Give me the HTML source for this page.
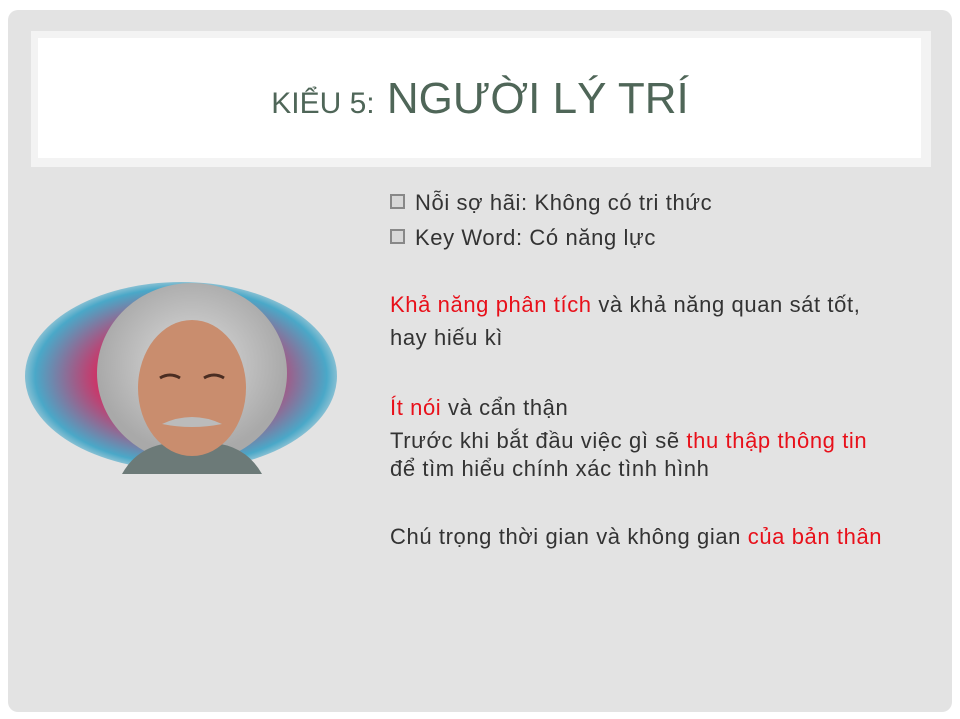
<!DOCTYPE html>
<html><head><meta charset="utf-8"><style>
body{margin:0;width:960px;height:719px;background:#fff;position:relative;overflow:hidden;font-family:"Liberation Sans","DejaVu Sans",sans-serif}
.frame{position:absolute;left:8px;top:10px;width:944px;height:702px;background:#e3e3e3;border-radius:10px}
.band{position:absolute;left:31px;top:31px;width:900px;height:136px;background:#f3f3f3}
.inner{position:absolute;left:38px;top:38px;width:883px;height:120px;background:#fff}
.title{position:absolute;left:0;width:960px;top:74px;text-align:center;color:#4f6658;font-size:44px;letter-spacing:0}
.title small{font-size:30px}
.t{position:absolute;left:390px;font-size:22px;letter-spacing:0.6px;color:#333;white-space:nowrap}
.r{color:#e8101a}
.cb{display:inline-block;width:11px;height:11px;border:2px solid #888;background:#d8d8d8;margin-right:10px;vertical-align:1px}
</style></head><body>
<div class="frame"></div>
<div class="band"></div><div class="inner"></div>
<div class="title"><small>KIỂU 5:</small> NGƯỜI LÝ TRÍ</div>
<svg style="position:absolute;left:22px;top:278px" width="318" height="196">
<defs>
<radialGradient id="bg" cx="50%" cy="50%" r="55%"><stop offset="0" stop-color="#7a4a6a"/><stop offset=".5" stop-color="#c8386a"/><stop offset=".85" stop-color="#4aa8c8"/><stop offset="1" stop-color="#e3e3e3"/></radialGradient>
<radialGradient id="hair" cx="50%" cy="45%" r="50%"><stop offset="0" stop-color="#ddd"/><stop offset="1" stop-color="#a9a9a9"/></radialGradient>
</defs>
<ellipse cx="159" cy="98" rx="156" ry="94" fill="url(#bg)"/>
<ellipse cx="170" cy="95" rx="95" ry="90" fill="url(#hair)"/>
<path d="M100 196 Q120 160 170 165 Q220 160 240 196Z" fill="#6c7a78"/>
<ellipse cx="170" cy="110" rx="54" ry="68" fill="#c98d6e"/>
<path d="M138 100 q10 -6 20 0 M182 100 q10 -6 20 0" stroke="#4a2d22" stroke-width="3" fill="none"/>
<path d="M140 146 q30 -14 60 0 q-30 6 -60 0Z" fill="#bbb"/>
</svg>
<div class="t" style="top:190px"><span class="cb"></span>Nỗi sợ hãi: Không có tri thức</div>
<div class="t" style="top:225px"><span class="cb"></span>Key Word: Có năng lực</div>
<div class="t" style="top:292px"><span class="r">Khả năng phân tích</span> và khả năng quan sát tốt,</div>
<div class="t" style="top:325px">hay hiếu kì</div>
<div class="t" style="top:395px"><span class="r">Ít nói</span> và cẩn thận</div>
<div class="t" style="top:428px">Trước khi bắt đầu việc gì sẽ <span class="r">thu thập thông tin</span></div>
<div class="t" style="top:456px">để tìm hiểu chính xác tình hình</div>
<div class="t" style="top:524px">Chú trọng thời gian và không gian <span class="r">của bản thân</span></div>
</body></html>
